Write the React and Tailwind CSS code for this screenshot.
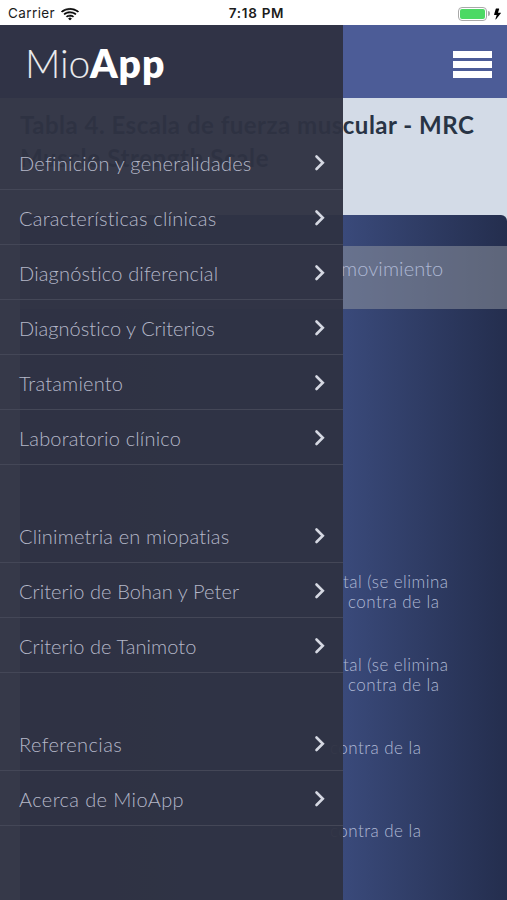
import React from "react";
import { BsWifi, BsLightningFill } from "react-icons/bs";

const menuGroups = [
  [
    { label: "Definición y generalidades", spacing: "tracking-[0.25px]" },
    { label: "Características clínicas", spacing: "tracking-[0.22px]" },
    { label: "Diagnóstico diferencial", spacing: "tracking-[0.17px]" },
    { label: "Diagnóstico y Criterios", spacing: "tracking-[0.04px]" },
    { label: "Tratamiento", spacing: "tracking-[0.2px]" },
    { label: "Laboratorio clínico", spacing: "tracking-[0.18px]" },
  ],
  [
    { label: "Clinimetria en miopatias", spacing: "tracking-[0.16px]" },
    { label: "Criterio de Bohan y Peter", spacing: "tracking-[0.08px]" },
    { label: "Criterio de Tanimoto", spacing: "tracking-[0.07px]" },
  ],
  [
    { label: "Referencias", spacing: "tracking-[0.4px]" },
    { label: "Acerca de MioApp", spacing: "tracking-[0.38px]" },
  ],
];

const grades = [
  { lines: ["tal (se elimina", "contra de la"], indent: "pl-[5px]" },
  { lines: ["tal (se elimina", "contra de la"], indent: "pl-[5px]" },
  { lines: ["contra de la"], indent: "-ml-[13px]" },
  { lines: ["contra de la"], indent: "-ml-[13px]" },
];

const StatusBar = () => (
  <div className="h-[25px] bg-white grid grid-cols-3 items-center pl-2 pr-1 pt-[2px] font-['Inter',sans-serif] text-[13.5px] text-[#1c1c1c]">
    <div className="flex items-center gap-[6px]">
      <span className="tracking-[0.4px]">Carrier</span>
      <BsWifi className="w-[18px] h-[18px] text-black" strokeWidth={0.6} />
    </div>
    <div className="pl-[2px] text-center font-semibold tracking-[0.7px]">7:18 PM</div>
    <div className="flex items-center justify-end">
      <div className="w-[29px] h-[14px] rounded-[4px] border border-[#a9a9a9] p-[1px]">
        <div className="h-full rounded-[2px] bg-[#4cd964]" />
      </div>
      <div className="w-[2px] h-[5px] ml-[1px] rounded-r bg-[#a9a9a9]" />
      <BsLightningFill className="w-[11px] h-[12px] ml-[2px] text-black" />
    </div>
  </div>
);

const Chevron = () => (
  <svg width="12" height="18" viewBox="0 0 12 18" fill="none">
    <path
      d="M2.5 2.5L8.8 8.8L2.5 15"
      stroke="#d5d8e2"
      strokeWidth="2.6"
      strokeLinecap="round"
      strokeLinejoin="miter"
    />
  </svg>
);

const Drawer = () => (
  <aside className="absolute left-0 top-0 w-[343px] h-full bg-[#2f3243]/96 flex flex-col">
    <div className="h-[110px] shrink-0 pl-[25px] pt-[14px] text-[39px] leading-[48px] text-white">
      <span className="font-light -tracking-[0.2px] text-white/90">Mio</span>
      <span className="font-extrabold tracking-[0.9px]">App</span>
    </div>
    <div className="flex flex-col gap-[43px]">
      {menuGroups.map((group, idx) => (
        <nav key={idx}>
          {group.map((item) => (
            <a
              key={item.label}
              className="h-[55px] flex items-center justify-between pl-[19px] pr-[17px] pt-px border-b border-[#444757] text-[20px] font-light text-[#b4b7c8]"
            >
              <span className={item.spacing}>{item.label}</span>
              <Chevron />
            </a>
          ))}
        </nav>
      ))}
    </div>
  </aside>
);

const App = () => {
  return (
    <div className="w-[507px] h-[900px] overflow-hidden bg-[#d3dbe7] font-['Lato',sans-serif]">
      <StatusBar />

      <div className="relative h-[875px] overflow-hidden flex flex-col">
        {/* Header */}
        <header className="h-[73px] shrink-0 bg-[#4c5c97] flex items-center justify-end pr-[15px] pt-[6px]">
          <div className="w-[39px] flex flex-col gap-[3px]">
            <div className="h-[7px] bg-white" />
            <div className="h-[7px] bg-white" />
            <div className="h-[7px] bg-white" />
          </div>
        </header>

        {/* Title */}
        <h1 className="h-[117px] shrink-0 pl-5 pt-[10px] text-[24px] leading-[33px] tracking-[0.5px] font-bold text-[#283445] whitespace-nowrap">
          Tabla 4. Escala de fuerza muscular - MRC
          <br />
          <span className="tracking-[0.63px]">Muscle Strength Scale</span>
        </h1>

        {/* Scale card */}
        <section className="flex-1 ml-5 rounded-t-[6px] overflow-hidden bg-linear-to-r from-[#37436f] from-0% via-[#3a4a7b] via-66% to-[#242e4e] to-100% pt-[31px] text-[#aeb8d4] font-light">
          <div className="h-[63px] bg-[#8e939f]/55 pl-[323px] pt-[7px] text-[20px] leading-[30px]">
            <span className="-ml-[2px] tracking-[0.1px]">movimiento</span>
          </div>
          <div className="pt-[263px] pl-[323px] text-[17px] leading-[20px] tracking-[0.45px]">
            {grades.map((grade, idx) => (
              <div key={idx} className="h-[83px]">
                {grade.lines.map((line) => (
                  <p key={line} className={line.startsWith("contra") ? grade.indent : ""}>
                    {line}
                  </p>
                ))}
              </div>
            ))}
          </div>
        </section>

        <Drawer />
      </div>
    </div>
  );
};

export default App;
